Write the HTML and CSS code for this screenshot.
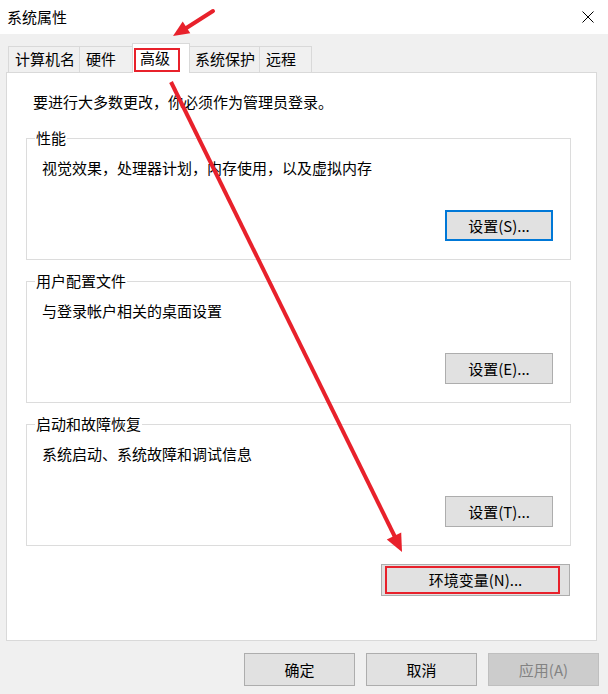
FILE: index.html
```html
<!DOCTYPE html>
<html lang="zh-CN">
<head>
<meta charset="utf-8">
<title>系统属性</title>
<link rel="stylesheet" href="styles.css">
</head>
<body>
<div class="window">
  <div class="titlebar">
    <span class="title">系统属性</span>
    <button class="close" aria-label="关闭">
      <svg width="12" height="12" viewBox="0 0 12 12"><path d="M0.5 0.5 L11.5 11.5 M11.5 0.5 L0.5 11.5" stroke="#000" stroke-width="1" fill="none"/></svg>
    </button>
  </div>
  <div class="body">
    <div class="tabs">
      <div class="tab t1">计算机名</div>
      <div class="tab t2">硬件</div>
      <div class="tab selected">高级<span class="mark-tab"></span></div>
      <div class="tab t4">系统保护</div>
      <div class="tab t5">远程</div>
    </div>
    <div class="panel">
      <p class="intro">要进行大多数更改，你必须作为管理员登录。</p>
      <fieldset class="group">
        <legend>性能</legend>
        <p class="desc">视觉效果，处理器计划，内存使用，以及虚拟内存</p>
        <div class="group-actions"><button class="btn focus">设置(S)...</button></div>
      </fieldset>
      <fieldset class="group">
        <legend>用户配置文件</legend>
        <p class="desc">与登录帐户相关的桌面设置</p>
        <div class="group-actions"><button class="btn">设置(E)...</button></div>
      </fieldset>
      <fieldset class="group">
        <legend>启动和故障恢复</legend>
        <p class="desc">系统启动、系统故障和调试信息</p>
        <div class="group-actions"><button class="btn">设置(T)...</button></div>
      </fieldset>
      <div class="env-row">
        <button class="btn env">环境变量(N)...<span class="mark-env"></span></button>
      </div>
    </div>
    <div class="footer">
      <button class="btn dlg">确定</button>
      <button class="btn dlg">取消</button>
      <button class="btn dlg disabled">应用(A)</button>
    </div>
  </div>
  <svg class="arrows" width="608" height="694" viewBox="0 0 608 694">
    <line x1="213" y1="11" x2="184" y2="29.5" stroke="#e8212b" stroke-width="4" stroke-linecap="round"/>
    <polygon points="173,36 190.3,33.3 182.7,21.5" fill="#e8212b"/>
    <line x1="171" y1="82" x2="395" y2="537" stroke="#e8212b" stroke-width="4" stroke-linecap="butt"/>
    <polygon points="402,552 401.2,532.4 386.8,539.4" fill="#e8212b"/>
  </svg>
</div>
</body>
</html>
```
FILE: styles.css
```css
* { box-sizing: border-box; }
html, body { margin: 0; padding: 0; }
body {
  width: 608px;
  height: 694px;
  background: #f0f0f0;
  font-family: "Noto Sans CJK SC", "Microsoft YaHei", sans-serif;
  font-size: 15px;
  line-height: 20px;
  color: #000;
  overflow: hidden;
}
.window { position: relative; width: 608px; height: 694px; }
.titlebar {
  height: 34px;
  background: #fff;
  display: flex;
  align-items: center;
  justify-content: space-between;
  padding-left: 7px;
  padding-right: 14px;
}
.close {
  border: 0;
  background: transparent;
  padding: 0;
  width: 12px;
  height: 12px;
  display: block;
  margin-top: -1px;
}
.close svg { display: block; }
.body { padding-top: 10px; }
.tabs {
  display: flex;
  align-items: flex-end;
  padding-left: 8px;
  height: 28px;
  position: relative;
  z-index: 2;
}
.tab {
  flex: none;
  height: 26px;
  padding: 0 0 0 6px;
  border: 1px solid #d9d9d9;
  border-bottom: 0;
  background: #f0f0f0;
  line-height: 24px;
  margin-left: -1px;
  white-space: nowrap;
}
.tab.t1 { margin-left: 0; width: 72px; }
.tab.t2 { width: 56px; }
.tab.t4 { width: 72px; margin-left: 0; }
.tab.t5 { width: 53px; }
.tab.selected {
  position: relative;
  width: 58px;
  height: 30px;
  margin-left: -3px;
  margin-right: -2px;
  margin-bottom: -1px;
  padding-left: 7px;
  background: #fff;
  line-height: 27px;
  z-index: 3;
}
.mark-tab {
  position: absolute;
  left: 1px;
  top: 4px;
  width: 46px;
  height: 24px;
  border: 2px solid #e8212b;
}
.panel {
  margin-left: 6px;
  width: 591px;
  background: #fff;
  border: 1px solid #d9d9d9;
  padding: 19px 25px 44px 19px;
}
.intro { margin: 0 0 0 7px; }
.group {
  margin: 16px 0 0 0;
  padding: 0 0 18px 8px;
  border: 1px solid #dcdcdc;
  min-width: 0;
}
.group + .group { margin-top: 11px; }
.group legend {
  padding: 0 1px;
  line-height: 20px;
}
.desc { margin: 10px 0 0 7px; }
.group-actions {
  display: flex;
  justify-content: flex-end;
  margin-top: 32px;
  padding-right: 17px;
}
.btn {
  font-family: inherit;
  font-size: 15px;
  line-height: 20px;
  color: #000;
  background: #e1e1e1;
  border: 1px solid #adadad;
  border-radius: 0;
  padding: 0;
  width: 108px;
  height: 31px;
  margin: 0;
}
.btn.focus { border: 2px solid #0078d7; }
.env-row {
  display: flex;
  justify-content: flex-end;
  margin-top: 18px;
  padding-right: 1px;
}
.btn.env {
  position: relative;
  width: 189px;
  height: 32px;
}
.mark-env {
  position: absolute;
  left: 3px;
  top: 1px;
  width: 175px;
  height: 28px;
  border: 2px solid #e8212b;
}
.footer {
  display: flex;
  justify-content: flex-end;
  gap: 11px;
  padding-right: 9px;
  margin-top: 12px;
}
.btn.dlg { width: 111px; height: 33px; }
.btn.disabled {
  background: #cccccc;
  border-color: #bfbfbf;
  color: #838383;
}
.arrows {
  position: absolute;
  left: 0;
  top: 0;
  pointer-events: none;
  z-index: 10;
}
```
